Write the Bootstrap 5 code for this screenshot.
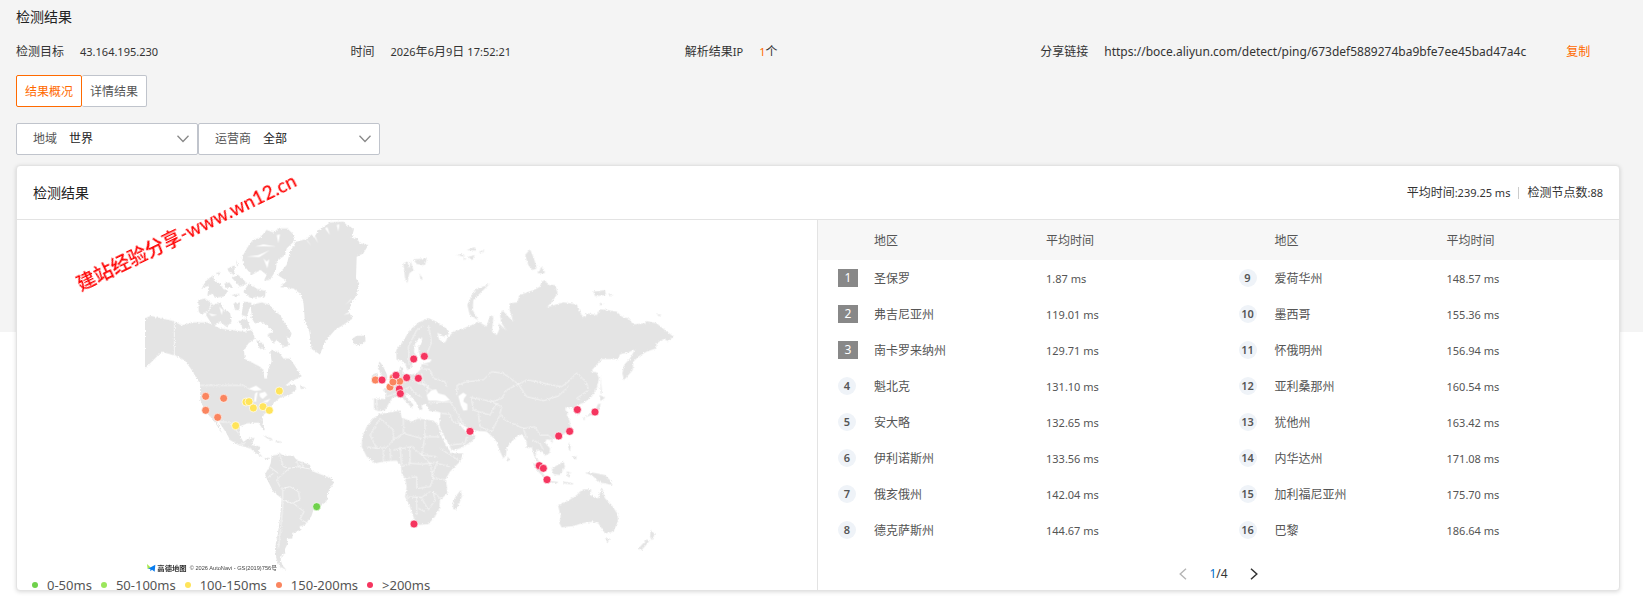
<!DOCTYPE html>
<html lang="zh-CN">
<head>
<meta charset="utf-8">
<meta name="viewport" content="width=device-width, initial-scale=1">
<title>检测结果</title>
<link href="https://cdn.jsdelivr.net/npm/bootstrap@5.3.0/dist/css/bootstrap.min.css" rel="stylesheet">
<style>
body{font:12px/18px "Noto Sans","Noto Sans CJK SC",sans-serif;color:#333;background:linear-gradient(#f4f4f4,#f4f4f4) 0 0/100% 332px no-repeat #fff}
.page{padding:8px 23px 10px 16px}
.latin{font-size:11px}
.heading{font-size:14px;line-height:18px;font-weight:400;margin:0;color:#222}
.meta{height:18px;margin:17px 0 14px}
.meta-col{width:20.85%}
.share{padding-left:21px}
.accent{color:#ff6a00}
.copy{margin-left:24px}
.tab-btn{font-size:12px;line-height:18px;padding:7px 8px 5px;height:32px;border:1px solid #c0c4cc;border-radius:2px;background:#fff;color:#555}
.tab-btn.on{border-color:#ff6a00;color:#ff6a00;z-index:1}
.pick{width:182px;height:32px;border:1px solid #c0c4cc;border-radius:2px;background:#fff;padding:0 8px 0 16px;gap:12px;color:#555}
.pick select{appearance:none;border:0;background:none;padding:0;color:#222;outline:0;min-width:0}
.panel{background:#fff;border:1px solid #e3e3e3;border-radius:4px;box-shadow:0 1px 4px rgba(0,0,0,.15);margin-top:10px}
.panel-top{height:54px;padding:0 16px;border-bottom:1px solid #e3e3e3}
.rule{width:1px;height:12px;background:#ccc}
.map-pane{border-right:1px solid #e3e3e3}
.map-box{padding-left:128px}
.map-box svg{display:block;width:530px;max-width:100%;height:352px}
.legend-row{height:18px;padding:8px 0 0 15px;gap:9px;font-size:13px;line-height:18px;color:#555}
.dot{width:6px;height:6px;border-radius:50%;flex:none}
.rank-table{font-size:12px;line-height:18px;table-layout:fixed;margin:0;--bs-table-bg:transparent;--bs-table-color:#555;color:#555}
.rank-table th,.rank-table td{padding:2px 0 0;border:0;height:36px;vertical-align:middle;font-weight:400}
.rank-table thead th{height:40px;background:#f7f7f7}
.rank-table .c1{width:56px}.rank-table .c2{width:172px}
.rank-table td:first-child{padding:0 0 0 20px}
.rank-table td:last-child{font-size:11px}
.no{display:block;width:18px;height:18px;line-height:18px;border-radius:50%;background:#eff3f8;text-align:center;font-size:11px;font-weight:600;color:#555}
.no.top{width:20px;border-radius:0;background:#888;color:#fff;font-weight:400;font-size:12px}
.pager{height:42px;padding-top:10px;gap:20px}
.pager button{border:0;background:none;padding:0;width:12px;height:18px;line-height:0}
.mark-text{position:absolute;left:66px;top:52px;font:500 19px/24px Lato,"Noto Sans CJK SC",sans-serif;color:#f00;white-space:nowrap;transform:rotate(-26deg);transform-origin:0 100%;pointer-events:none}
</style>
</head>
<body>
<main class="page">
  <h1 class="heading">检测结果</h1>
  <div class="meta d-flex align-items-center">
    <div class="meta-col d-flex gap-3"><span>检测目标</span><span class="latin">43.164.195.230</span></div>
    <div class="meta-col d-flex gap-3"><span>时间</span><span><span class="latin">2026</span>年<span class="latin">6</span>月<span class="latin">9</span>日 <span class="latin">17:52:21</span></span></div>
    <div class="meta-col d-flex gap-3"><span>解析结果<span class="latin">IP</span></span><span><span class="accent latin">1</span>个</span></div>
    <div class="share d-flex align-items-center flex-grow-1 gap-3"><span>分享链接</span><span>https://boce.aliyun.com/detect/ping/673def5889274ba9bfe7ee45bad47a4c</span><a href="#" class="accent copy text-decoration-none">复制</a></div>
  </div>
  <div class="d-flex">
    <button type="button" class="tab-btn on">结果概况</button><button type="button" class="tab-btn border-start-0">详情结果</button>
  </div>
  <div class="d-flex mt-3">
    <div class="pick d-flex align-items-center"><label for="area">地域</label><select id="area" class="flex-grow-1"><option>世界</option></select><svg width="12" height="8" fill="none" stroke="#888" stroke-width="1.3"><path d="M0.5 0.8 6 6.5 11.5.8"/></svg></div>
    <div class="pick d-flex align-items-center"><label for="isp">运营商</label><select id="isp" class="flex-grow-1"><option>全部</option></select><svg width="12" height="8" fill="none" stroke="#888" stroke-width="1.3"><path d="M0.5 0.8 6 6.5 11.5.8"/></svg></div>
  </div>

  <section class="panel">
    <div class="panel-top d-flex justify-content-between align-items-center">
      <h2 class="heading">检测结果</h2>
      <div class="d-flex align-items-center gap-2"><span>平均时间<span class="latin">:239.25 ms</span></span><span class="rule"></span><span>检测节点数<span class="latin">:88</span></span></div>
    </div>
    <div class="row g-0">
      <div class="col-6 map-pane position-relative">
        <div class="map-box">
          <svg viewBox="435 660 1590 1056" preserveAspectRatio="xMinYMin meet">
            <defs>
              <filter id="coast" x="-2%" y="-2%" width="104%" height="104%"><feTurbulence type="fractalNoise" baseFrequency=".2" numOctaves="2" seed="4"/><feDisplacementMap in="SourceGraphic" scale="9" xChannelSelector="R" yChannelSelector="G"/></filter>
            </defs>
            <g filter="url(#coast)" fill="#e4e4e4">
              <!-- North America, the Arctic islands and Greenland -->
              <g transform="translate(390 645)">
                <path d="M45 310 62 302 85 308 130 318 155 331 190 322 232 322 270 340 300 345 345 350 366 344 375 370 355 385 342 408 345 432 390 455 400 465 403 490 411 490 415 460 425 440 420 405 445 410 460 430 480 430 500 460 515 485 480 500 466 512 492 508 500 522 478 540 450 548 430 565 418 585 402 598 395 615 405 645 400 645 385 622 350 625 330 635 328 660 340 680 356 670 374 669 365 690 391 695 386 712 400 728 421 728 412 733 385 720 360 700 325 690 300 675 290 655 270 625 263 612 262 620 277 655 268 642 245 608 228 595 211 555 210 505 200 490 185 465 165 437 145 425 95 410 75 430 45 460Z"/>
                <path d="M510 510 530 520 512 522ZM398 660 425 670 430 676 412 670ZM437 678 455 680 455 684 437 682Z"/>
                <path d="M443 180 470 150 480 110 498 80 530 72 545 58 552 68 565 46 600 22 640 20 650 30 672 42 665 70 680 68 690 85 715 90 700 115 680 125 678 190 688 205 680 240 665 262 656 290 668 310 640 330 615 345 585 380 570 418 545 402 538 350 525 320 520 260 510 235 490 220 450 216 470 198Z"/>
                <path d="M335 128 352 98 368 75 390 68 410 45 430 52 446 40 472 40 492 60 495 76 470 100 465 120 440 140 438 165 420 195 402 196 410 180 392 165 365 180 342 152Z"/>
                <path d="M205 255 225 250 246 265 235 285 215 300 206 290ZM228 300 245 272 270 262 282 285 300 292 305 320 290 336 270 320 250 335Z"/>
                <path d="M215 220 228 198 250 180 252 196 268 205 280 222 295 228 280 245 255 248 248 236 232 242 236 212ZM256 175 272 170 268 180ZM292 160 315 152 312 180 296 170ZM318 135 325 150 321 154ZM283 205 298 202 310 218 286 218ZM305 188 325 180 340 195 352 205 330 215ZM357 205 382 222 407 228 405 246 360 248 340 230ZM304 240 330 236 320 246ZM310 265 330 262 328 285 315 285ZM340 260 365 263 350 305 335 300Z"/>
                <path d="M362 270 395 262 420 270 430 285 450 300 465 325 485 355 480 370 468 365 478 392 462 396 440 375 430 385 412 360 430 350 410 330 390 320 375 325 365 300ZM325 318 350 310 362 340 340 342ZM378 375 400 385 404 400 390 402ZM362 304 380 310 375 326Z"/>
                <path d="M668 370 680 363 705 362 706 376 690 390 672 386ZM748 440 758 452 770 478 772 495 750 500 758 475 745 460ZM728 480 743 475 740 496 726 500Z"/>
              </g>
              <path transform="translate(390 1185)" d="M425 182 440 180 448 173 460 182 490 182 500 195 540 210 545 228 565 235 605 250 612 262 595 290 590 318 570 335 550 345 545 362 525 390 508 394 512 405 488 415 487 430 470 432 473 445 465 462 466 475 455 480 452 495 458 512 470 525 450 515 440 495 435 460 443 420 450 370 455 310 430 290 410 250 405 238 418 215 422 205Z"/>
              <!-- Europe, Asia, Africa and Oceania -->
              <g transform="translate(1050 930)">
                <path d="M140 150 138 122 158 95 180 60 205 38 235 24 262 36 292 58 297 72 280 80 262 68 268 90 285 98 292 85 310 65 340 55 365 45 385 35 410 50 420 15 430 20 426 65 440 75 448 58 446 40 470 62 455 40 450 15 457 0 470 15 490 35 480 5 478-20 502-23 508-45 550-60 570-70 575-85 585-90 595-75 615-75 623-50 605-23 590-8 640-23 680-17 695 15 705 23 710 10 740 15 750-2 775 0 800 5 815 20 835 25 850 43 885 40 890 33 920 40 945 60 970 80 955 93 940 87 920 100 918 115 890 125 865 140 850 155 848 180 835 195 822 210 817 190 822 165 840 145 855 118 835 127 810 133 805 147 755 147 722 185 740 187 747 205 740 235 725 260 702 278 680 286 692 300 690 312 678 312 668 292 650 292 645 300 655 308 650 315 660 335 657 355 645 370 625 382 605 390 590 388 585 398 600 415 598 430 585 437 575 425 560 418 556 440 572 460 558 452 550 430 545 412 530 415 530 395 515 372 500 380 480 400 470 415 468 435 460 445 448 420 440 395 425 378 410 365 375 362 345 350 330 340 320 325 330 345 345 362 362 372 378 378 365 395 330 415 305 422 300 410 275 365 268 345 272 308 262 305 240 303 232 290 228 282 214 285 218 298 208 300 200 280 185 262 170 248 165 258 178 272 190 284 185 294 175 282 155 262 140 260 128 262 118 278 105 300 85 303 72 298 72 265 105 267 110 250 98 240 115 228 125 205 145 195 150 172 158 172 158 190 175 195 200 190 212 178 215 162 240 156 245 148 215 148 207 130 205 112 217 95 215 82 205 86 194 105 192 125 200 140 188 150 185 172 172 180 165 160 152 150Z"/>
                <path d="M88 312 150 302 155 323 185 335 205 326 250 332 264 345 275 380 290 410 305 430 340 430 330 455 300 485 288 505 292 550 270 570 268 595 255 620 235 642 200 645 190 620 178 585 165 560 170 530 165 505 155 490 152 465 140 452 100 455 75 460 50 440 35 410 37 380 50 350 70 325ZM332 540 336 558 320 598 310 598 308 575 318 558Z"/>
                <path d="M10 88 20 78 46 83 44 96 25 106 10 98ZM88 155 98 170 110 195 112 208 88 215 95 195 84 175ZM66 195 82 188 80 215 66 212Z"/>
                <path d="M160-140 172-145 178-125 182-148 190-120 178-110 172-80 165-95ZM190-152 230-155 225-135 200-138ZM208-110 218-95 212-90ZM318-165 340-168 345-160ZM350-180 372-188 378-178ZM355-160 375-165 365-150ZM385-172 402-182 400-172ZM340-155 350-155 342-150ZM420-80 400-70 380-65 365-45 352-15 358 10 365 20 385 30 368 0 370-30ZM525-165 540-182 552-155 560-125 548-120 535-135ZM562-110 575-130 585-110ZM730-55 765-60 768-45 735-42ZM775-50 790-45 780-40ZM748-22 760-18 752-13ZM920 14 934 14 928 19Z"/>
                <path d="M752 196 756 250 752 252ZM748 255 766 262 752 273ZM744 282 752 280 748 300 725 315 702 322 735 302ZM700 322 706 328 700 330ZM657 340 663 350 658 360ZM602 392 610 393 604 400ZM656 398 662 408 660 425 655 415ZM665 440 680 438 678 450ZM472 440 480 448 474 455ZM545 457 560 465 590 505 585 505 562 482ZM590 510 625 516 622 521 590 515ZM605 475 640 455 645 470 630 495 610 492ZM650 485 665 488 655 492 662 502 652 500ZM705 487 720 487 740 490 765 495 780 510 788 526 765 520 750 518 730 500ZM640 515 670 520 668 524 640 520Z"/>
                <path d="M624 585 650 575 680 555 690 545 700 538 724 538 720 555 745 565 755 532 765 565 785 585 803 612 804 635 790 665 765 670 745 640 728 635 695 640 670 648 635 652 628 640 632 618ZM765 685 780 685 773 698ZM902 660 915 672 905 690 900 680ZM890 688 897 694 875 720 865 716Z"/>
              </g>
            </g>
            <!-- inland seas and lakes -->
            <g fill="#fff">
              <path transform="translate(1050 930)" d="M235 272 230 255 245 240 258 238 265 250 285 255 300 270 280 275 258 272ZM325 258 340 248 350 255 342 265 340 275 352 282 352 300 340 302 332 285Z"/>
              <path transform="translate(390 645)" d="M355 522 378 512 396 525 375 528ZM375 535 383 530 378 560 372 560ZM388 535 405 530 412 540 398 552 390 545ZM398 560 422 550 412 562Z"/>
              <!-- fjords and channels of the far north -->
              <path transform="translate(390 645)" d="M500 85 525 105 508 92ZM528 74 545 95 534 78ZM550 62 565 85 556 64ZM585 40 600 60 592 36ZM620 30 625 50 628 28ZM350 125 385 120 420 105 388 126ZM375 95 400 88 440 95 400 94ZM400 130 412 160 418 132 410 140ZM440 60 445 85 450 58ZM665 250 645 270 662 256ZM660 290 640 300 658 296ZM235 295 262 300 245 303ZM268 275 275 300 279 285Z"/>
            </g>
            <!-- borders -->
            <g fill="none" stroke="#fff" stroke-width="2" filter="url(#coast)">
              <path transform="translate(390 645)" d="M133 320V425M210 511H340L358 522M325 690 348 684M258 620 300 622 328 658M360 698 372 712"/>
              <path transform="translate(390 1185)" d="M448 175 460 215 478 220 455 240 440 255 450 275 458 285 458 340 452 400 445 460M478 220 505 215 540 222M458 280 480 275 505 290 510 315 485 325 458 315M490 325 522 350 510 372 545 392M418 215 445 235M410 250 430 235M500 195 505 215M515 203 520 218"/>
              <path transform="translate(1050 930)" d="M235 48 245 95 232 130M178 165 175 110 200 60 220 48M320 255 322 225 350 215 400 210 425 185 460 190 505 222 470 240 455 265 425 275 395 268 360 262M505 222 530 210 565 215 590 222 635 230 655 215 680 188 710 218 715 240 680 265 690 270M505 222 530 260 580 272 625 258 655 230M425 275 455 290 450 310 465 330 520 355 555 350 570 375 595 375 605 385M365 265 370 300 420 315 440 280M385 310 390 350 425 365 450 315M205 175 240 178 250 205 285 215 290 230M215 190 220 225 245 240M160 215 185 205 205 220 235 225 230 250M110 260 150 245 180 230 195 250 215 262M235 278 300 275 322 310 345 350M272 310 300 312 305 330 330 345M300 405 345 400 350 380M520 355 530 385M548 390 570 400 580 420M215 160 235 165"/>
              <path transform="translate(1050 930)" d="M90 325 60 375 80 415 110 412 130 390 130 360 90 325M160 325 160 370 130 390M225 332V380H268M225 380 215 435 260 440M160 370 215 385M130 420 185 410 215 435 240 460 265 455M180 410 180 460M50 410 80 415M100 420V455M120 415 122 455M150 410 155 465M155 470 180 460 215 462 240 460 250 505 240 530 200 535 200 500 165 505M165 560 215 562 240 545M200 562 200 615M215 565 235 600 255 570 250 545M250 505 290 510M245 500 260 460 300 470M270 415 325 450M205 595 225 605M250 545 275 570M80 265 82 300M725 495V515"/>
            </g>
            <g stroke="#fff" stroke-width="2">
              <g fill="#fa855f"><circle cx="617" cy="1189" r="12"/><circle cx="671" cy="1195" r="12"/><circle cx="617" cy="1231" r="12"/><circle cx="653" cy="1252" r="12"/><circle cx="1126" cy="1140" r="12"/><circle cx="1170" cy="1161" r="12"/><circle cx="1180" cy="1133" r="12"/><circle cx="1199" cy="1144" r="12"/><circle cx="1179" cy="1146" r="12"/></g>
              <g fill="#ffe45a"><circle cx="738" cy="1206" r="12"/><circle cx="747" cy="1205" r="12"/><circle cx="760" cy="1224" r="12"/><circle cx="789" cy="1220" r="12"/><circle cx="808" cy="1231" r="12"/><circle cx="707" cy="1277" r="12"/><circle cx="838" cy="1173" r="12"/></g>
              <circle cx="950" cy="1520" r="12" fill="#6fd14b"/>
              <g fill="#f5355f"><circle cx="1146" cy="1140" r="12"/><circle cx="1188" cy="1126" r="12"/><circle cx="1220" cy="1133" r="12"/><circle cx="1255" cy="1135" r="12"/><circle cx="1198" cy="1167" r="12"/><circle cx="1201" cy="1181" r="12"/><circle cx="1241" cy="1077" r="12"/><circle cx="1273" cy="1069" r="12"/><circle cx="1410" cy="1294" r="12"/><circle cx="1732" cy="1229" r="12"/><circle cx="1785" cy="1236" r="12"/><circle cx="1709" cy="1294" r="12"/><circle cx="1676" cy="1308" r="12"/><circle cx="1618" cy="1397" r="12"/><circle cx="1630" cy="1405" r="12"/><circle cx="1641" cy="1439" r="12"/><circle cx="1242" cy="1572" r="12"/></g>
            </g>
            <path d="M441 1692 453 1703 443 1707Z" fill="#a6e84a"/>
            <path d="M444 1706 466 1694 464 1715 456 1709 451 1714 451 1707Z" fill="#087cf0"/>
            <text x="472" y="1712" font-size="22" font-weight="700" fill="#333" font-family="Noto Sans CJK SC,sans-serif" stroke="#fff" stroke-width="5" paint-order="stroke">高德地图</text>
            <text x="569" y="1711" font-size="17" fill="#444" font-family="Liberation Sans,Noto Sans CJK SC,sans-serif" stroke="#fff" stroke-width="5" paint-order="stroke">© 2026 AutoNavi - GS(2019)756号</text>
          </svg>
        </div>
        <div class="legend-row d-flex align-items-center">
          <span class="dot" style="background:#6fd14b"></span><span>0-50ms</span>
          <span class="dot" style="background:#9be65c"></span><span>50-100ms</span>
          <span class="dot" style="background:#ffe45a"></span><span>100-150ms</span>
          <span class="dot" style="background:#fa855f"></span><span>150-200ms</span>
          <span class="dot" style="background:#f5355f"></span><span>&gt;200ms</span>
        </div>
        <div class="mark-text">建站经验分享-www.wn12.cn</div>
      </div>
      <div class="col-6">
        <div class="row g-0">
          <div class="col-6">
            <table class="table rank-table">
              <thead><tr><th class="c1"></th><th class="c2">地区</th><th>平均时间</th></tr></thead>
              <tbody>
                <tr><td><span class="no top">1</span></td><td>圣保罗</td><td>1.87 ms</td></tr>
                <tr><td><span class="no top">2</span></td><td>弗吉尼亚州</td><td>119.01 ms</td></tr>
                <tr><td><span class="no top">3</span></td><td>南卡罗来纳州</td><td>129.71 ms</td></tr>
                <tr><td><span class="no">4</span></td><td>魁北克</td><td>131.10 ms</td></tr>
                <tr><td><span class="no">5</span></td><td>安大略</td><td>132.65 ms</td></tr>
                <tr><td><span class="no">6</span></td><td>伊利诺斯州</td><td>133.56 ms</td></tr>
                <tr><td><span class="no">7</span></td><td>俄亥俄州</td><td>142.04 ms</td></tr>
                <tr><td><span class="no">8</span></td><td>德克萨斯州</td><td>144.67 ms</td></tr>
              </tbody>
            </table>
          </div>
          <div class="col-6">
            <table class="table rank-table">
              <thead><tr><th class="c1"></th><th class="c2">地区</th><th>平均时间</th></tr></thead>
              <tbody>
                <tr><td><span class="no">9</span></td><td>爱荷华州</td><td>148.57 ms</td></tr>
                <tr><td><span class="no">10</span></td><td>墨西哥</td><td>155.36 ms</td></tr>
                <tr><td><span class="no">11</span></td><td>怀俄明州</td><td>156.94 ms</td></tr>
                <tr><td><span class="no">12</span></td><td>亚利桑那州</td><td>160.54 ms</td></tr>
                <tr><td><span class="no">13</span></td><td>犹他州</td><td>163.42 ms</td></tr>
                <tr><td><span class="no">14</span></td><td>内华达州</td><td>171.08 ms</td></tr>
                <tr><td><span class="no">15</span></td><td>加利福尼亚州</td><td>175.70 ms</td></tr>
                <tr><td><span class="no">16</span></td><td>巴黎</td><td>186.64 ms</td></tr>
              </tbody>
            </table>
          </div>
        </div>
        <div class="pager d-flex justify-content-center align-items-center">
          <button type="button" aria-label="上一页"><svg width="8" height="12" fill="none" stroke="#b5b5b5" stroke-width="1.4"><path d="M7 .7 1.2 6 7 11.3"/></svg></button>
          <span><span style="color:#0070cc">1</span>/4</span>
          <button type="button" aria-label="下一页"><svg width="8" height="12" fill="none" stroke="#333" stroke-width="1.5"><path d="M1 .7 6.8 6 1 11.3"/></svg></button>
        </div>
      </div>
    </div>
  </section>
</main>
<script src="https://cdn.jsdelivr.net/npm/bootstrap@5.3.0/dist/js/bootstrap.bundle.min.js"></script>
</body>
</html>
